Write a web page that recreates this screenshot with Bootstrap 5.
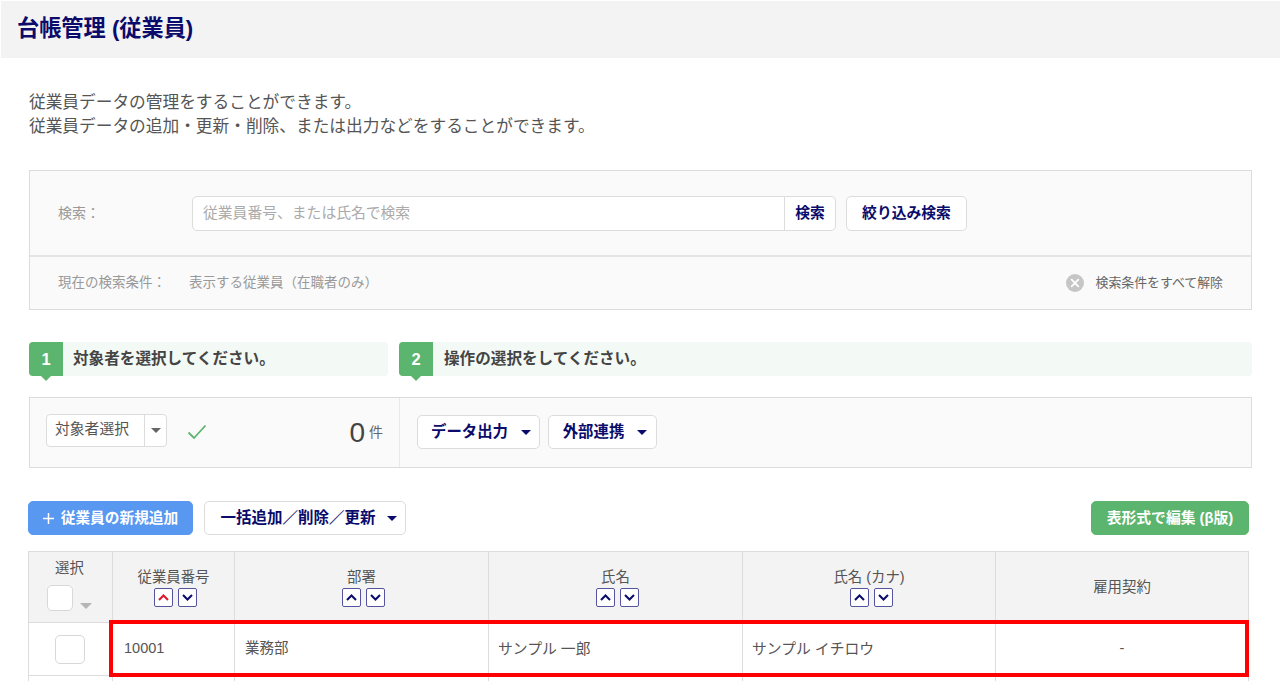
<!DOCTYPE html>
<html lang="ja">
<head>
<meta charset="utf-8">
<title>台帳管理 (従業員)</title>
<link rel="stylesheet" href="https://cdn.jsdelivr.net/npm/bootstrap@5.3.0/dist/css/bootstrap.min.css">
<style>
:root{--navy:#0b0b6b;--line:#dcdcdc;--green:#5cb56e;}
body{font-family:"Liberation Sans","Noto Sans CJK JP",sans-serif;color:#555;background:#fff;height:681px;overflow:hidden;}
.page-head{margin:1px 0 0 1px;height:57px;background:#f3f3f3;padding-left:16px;}
.page-head h1{font-size:22.2px;font-weight:700;color:var(--navy);margin:0;}
.page-body{padding:33px 28px 0 29px;}
.intro{font-size:16.7px;line-height:24px;margin:0 0 31px;color:#555;}
.search-box{border:1px solid var(--line);background:#fafafa;}
.search-main{height:84px;padding-left:28px;}
.search-label{width:134px;font-size:14px;color:#999;flex:none;}
.search-group{width:644px;flex:none;}
.search-group .form-control{height:35px;font-size:14.8px;padding:0 10px;border-color:var(--line);border-radius:5px 0 0 5px;}
.search-group .form-control::placeholder{color:#aaa;}
.white-btn{background:#fff;border:1px solid var(--line);color:var(--navy);font-weight:700;font-size:14.8px;border-radius:5px;padding:0;height:35px;line-height:1;}
.white-btn:hover{background:#fff;border-color:var(--line);color:var(--navy);}
.search-go{width:52px;}
.search-narrow{width:121px;margin-left:10px;}
.search-cond{height:54px;border-top:2px solid #e4e4e4;padding:0 28px;font-size:13.5px;color:#999;}
.cond-label{width:131px;}
.cond-clear{color:#666;font-size:12.9px;}
.steps{margin-top:32px;gap:11px;}
.step-bar{height:34px;background:#f3f9f4;border-radius:4px;font-size:15.6px;font-weight:700;color:#444;}
.step-one{width:359px;flex:none;}
.step-num{width:34px;height:34px;background:var(--green);color:#fff;border-radius:4px 0 0 4px;font-size:16.5px;margin-right:10px;position:relative;flex:none;}
.step-num::after{content:"";position:absolute;left:12px;bottom:-5px;border-left:5px solid transparent;border-right:5px solid transparent;border-top:5px solid var(--green);}
.step-two .step-num{margin-right:11px;}
.action-panel{margin-top:21px;height:71px;border:1px solid var(--line);background:#fafafa;}
.target-side{width:370px;flex:none;border-right:1px solid #e8e8e8;padding:0 16px;}
.target-pick{height:33px;width:121px;margin-top:-5px;border:1px solid var(--line);border-radius:4px;background:#fff;font-size:14.8px;color:#555;flex:none;}
.target-name{width:98px;padding-left:8px;border-right:1px solid var(--line);line-height:29px;height:31px;}
.caret-gray{width:0;height:0;border-left:5px solid transparent;border-right:5px solid transparent;border-top:5px solid #666;}
.tick{margin:-2px 0 0 20px;}
.count-num{font-size:28px;font-weight:300;color:#444;line-height:1;margin-left:auto;}
.count-unit{font-size:14px;color:#666;margin-left:4px;}
.drop-btn{height:34px;font-size:15.4px;border-radius:5px;display:inline-flex;align-items:center;justify-content:center;margin-top:-1px;padding-left:5px;}
.drop-btn.dropdown-toggle::after{border-top-width:5px;border-left-width:5px;border-right-width:5px;margin-left:13px;vertical-align:middle;}
.action-side{padding-left:17px;gap:8px;}
.out-btn{width:123px;}
.link-btn{width:109px;}
.tool-row{margin:33px 0 16px -1px;width:1221px;}
.add-btn{width:165px;height:34px;background:#5898f0;border:1px solid #5898f0;color:#fff;font-size:14.7px;font-weight:700;border-radius:5px;padding:0;display:inline-flex;align-items:center;justify-content:center;gap:7px;}
.add-btn:hover{background:#5898f0;border-color:#5898f0;color:#fff;}
.bulk-btn{width:202px;margin-left:11px;height:34px;margin-top:0;font-size:15.5px;padding-left:7px;}
.bulk-btn.dropdown-toggle::after{margin-left:11px;}
.grid-btn{width:158px;height:34px;background:var(--green);border:1px solid var(--green);color:#fff;font-size:14.8px;font-weight:700;border-radius:5px;padding:0;margin-left:auto;}
.grid-btn:hover{background:var(--green);border-color:var(--green);color:#fff;}
.ledger-wrap{margin-left:-1px;width:1221px;position:relative;}
.ledger{table-layout:fixed;width:1221px;margin:0;--bs-table-border-color:var(--line);font-size:14.5px;color:#555;}
.ledger th{height:71px;padding:0;background:#f3f3f3;font-weight:400;text-align:center;vertical-align:middle;color:#555;font-size:14.4px;line-height:20px;box-shadow:none;}
.ledger td{height:53px;padding:0 10px;vertical-align:middle;color:#555;}
.ledger td.num-cell{padding-left:11px;}
.ledger td.name-cell{padding-left:9px;font-size:14.8px;}
.ledger td.pick-cell{padding:0 12px 0 10px;}
.ledger .spacer td{height:20px;}
.sort-pair{gap:5px;margin-top:1px;padding-left:4px;}
.sort-key{width:19px;height:19px;border:1.5px solid #55559f;border-radius:2px;background:#fff;padding:0;line-height:0;}
.pick-line{margin-top:7px;}
.box-head{width:26px;height:26px;border:1px solid #d8d8d8;border-radius:5px;background:#fff;}
.caret-pale{width:0;height:0;border-left:6px solid transparent;border-right:6px solid transparent;border-top:6px solid #b5b5b5;margin:18px 0 0 7px;}
.box-row{width:30px;height:29px;border:1px solid #d8d8d8;border-radius:5px;background:#fff;margin:0 auto;}
.hilite{position:absolute;left:81px;top:69px;width:1140px;height:57px;border:4px solid #f00;pointer-events:none;}
.ledger th.head-pick{padding:0 2px 6px 0;}
</style>
</head>
<body>
<header class="page-head d-flex align-items-center"><h1>台帳管理 (従業員)</h1></header>
<main class="page-body">
  <p class="intro">従業員データの管理をすることができます。<br>従業員データの追加・更新・削除、または出力などをすることができます。</p>

  <section class="search-box">
    <div class="search-main d-flex align-items-center">
      <div class="search-label">検索：</div>
      <div class="input-group search-group">
        <input type="text" class="form-control" placeholder="従業員番号、または氏名で検索">
        <button class="btn white-btn search-go" type="button">検索</button>
      </div>
      <button class="btn white-btn search-narrow" type="button">絞り込み検索</button>
    </div>
    <div class="search-cond d-flex align-items-center">
      <span class="cond-label">現在の検索条件：</span>
      <span>表示する従業員（在職者のみ）</span>
      <span class="cond-clear ms-auto d-flex align-items-center gap-2">
        <svg width="18" height="18" viewBox="0 0 18 18" aria-hidden="true"><circle cx="9" cy="9" r="9" fill="#c6c6c6"/><path d="M5.7 5.7l6.6 6.600M12.300 5.7l-6.600 6.600" stroke="#fff" stroke-width="1.800" stroke-linecap="round"/></svg>
        <span class="ms-1">検索条件をすべて解除</span>
      </span>
    </div>
  </section>

  <div class="steps d-flex">
    <div class="step-bar step-one d-flex align-items-center"><span class="step-num d-flex align-items-center justify-content-center">1</span>対象者を選択してください。</div>
    <div class="step-bar step-two flex-grow-1 d-flex align-items-center"><span class="step-num d-flex align-items-center justify-content-center">2</span>操作の選択をしてください。</div>
  </div>

  <section class="action-panel d-flex">
    <div class="target-side d-flex align-items-center">
      <div class="target-pick d-flex align-items-center">
        <span class="target-name">対象者選択</span>
        <span class="flex-grow-1 d-flex justify-content-center"><span class="caret-gray"></span></span>
      </div>
      <svg class="tick" width="20" height="16" viewBox="0 0 20 16" aria-hidden="true"><path d="M1.5 8.5l5.5 5.500L18.500 1.500" fill="none" stroke="#5cb56e" stroke-width="1.800"/></svg>
      <span class="count-num">0</span><span class="count-unit align-self-center">件</span>
    </div>
    <div class="action-side d-flex align-items-center">
      <button class="btn white-btn drop-btn dropdown-toggle out-btn" type="button">データ出力</button>
      <button class="btn white-btn drop-btn dropdown-toggle link-btn" type="button">外部連携</button>
    </div>
  </section>

  <div class="tool-row d-flex">
    <button class="btn add-btn" type="button"><svg width="11" height="11" viewBox="0 0 11 11" aria-hidden="true"><path d="M5.5 0v11M0 5.5h11" stroke="#fff" stroke-width="1.500"/></svg>従業員の新規追加</button>
    <button class="btn white-btn drop-btn dropdown-toggle bulk-btn" type="button">一括追加／削除／更新</button>
    <button class="btn grid-btn" type="button">表形式で編集 (β版)</button>
  </div>

  <div class="ledger-wrap">
    <table class="table table-bordered ledger">
      <colgroup><col style="width:84px"><col style="width:122px"><col style="width:254px"><col style="width:254px"><col style="width:253px"><col></colgroup>
      <thead>
        <tr>
          <th class="head-pick"><div>選択</div><div class="pick-line d-flex justify-content-center"><span class="box-head"></span><span class="caret-pale"></span></div></th>
          <th><div>従業員番号</div><div class="sort-pair d-flex justify-content-center"><button class="sort-key" type="button" aria-label="昇順"><svg width="13" height="9" viewBox="0 0 13 9"><path d="M2 7l4.500-4.500L11 7" fill="none" stroke="#e0162b" stroke-width="2"/></svg></button><button class="sort-key" type="button" aria-label="降順"><svg width="13" height="9" viewBox="0 0 13 9"><path d="M2 2l4.500 4.500L11 2" fill="none" stroke="#0b0b6b" stroke-width="2"/></svg></button></div></th>
          <th><div>部署</div><div class="sort-pair d-flex justify-content-center"><button class="sort-key" type="button" aria-label="昇順"><svg width="13" height="9" viewBox="0 0 13 9"><path d="M2 7l4.500-4.500L11 7" fill="none" stroke="#0b0b6b" stroke-width="2"/></svg></button><button class="sort-key" type="button" aria-label="降順"><svg width="13" height="9" viewBox="0 0 13 9"><path d="M2 2l4.500 4.500L11 2" fill="none" stroke="#0b0b6b" stroke-width="2"/></svg></button></div></th>
          <th><div>氏名</div><div class="sort-pair d-flex justify-content-center"><button class="sort-key" type="button" aria-label="昇順"><svg width="13" height="9" viewBox="0 0 13 9"><path d="M2 7l4.500-4.500L11 7" fill="none" stroke="#0b0b6b" stroke-width="2"/></svg></button><button class="sort-key" type="button" aria-label="降順"><svg width="13" height="9" viewBox="0 0 13 9"><path d="M2 2l4.500 4.500L11 2" fill="none" stroke="#0b0b6b" stroke-width="2"/></svg></button></div></th>
          <th><div>氏名 (カナ)</div><div class="sort-pair d-flex justify-content-center"><button class="sort-key" type="button" aria-label="昇順"><svg width="13" height="9" viewBox="0 0 13 9"><path d="M2 7l4.500-4.500L11 7" fill="none" stroke="#0b0b6b" stroke-width="2"/></svg></button><button class="sort-key" type="button" aria-label="降順"><svg width="13" height="9" viewBox="0 0 13 9"><path d="M2 2l4.500 4.500L11 2" fill="none" stroke="#0b0b6b" stroke-width="2"/></svg></button></div></th>
          <th>雇用契約</th>
        </tr>
      </thead>
      <tbody>
        <tr>
          <td class="pick-cell"><div class="box-row"></div></td>
          <td class="num-cell">10001</td>
          <td>業務部</td>
          <td class="name-cell">サンプル 一郎</td>
          <td class="name-cell">サンプル イチロウ</td>
          <td class="text-center">-</td>
        </tr>
        <tr class="spacer"><td></td><td></td><td></td><td></td><td></td><td></td></tr>
      </tbody>
    </table>
    <div class="hilite"></div>
  </div>
</main>
<script src="https://cdn.jsdelivr.net/npm/bootstrap@5.3.0/dist/js/bootstrap.bundle.min.js"></script>
</body>
</html>
